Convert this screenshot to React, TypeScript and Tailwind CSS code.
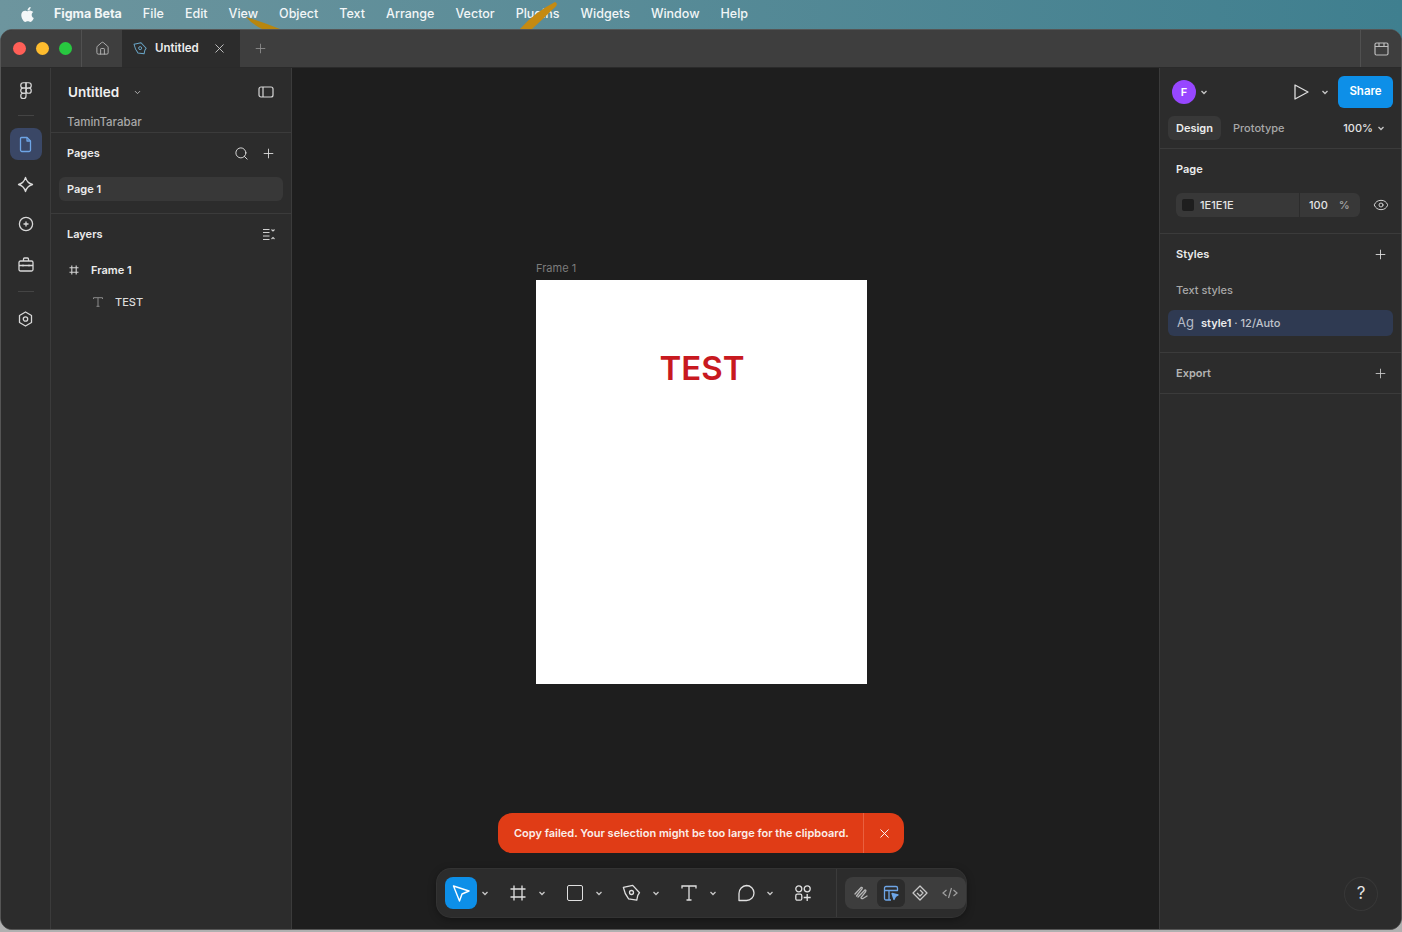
import { ChevronDown, Eye, House, Plus, Search, X } from "lucide-react";
import type { ReactNode } from "react";

const MENU_ITEMS = ["File", "Edit", "View", "Object", "Text", "Arrange", "Vector", "Plugins", "Widgets", "Window", "Help"];

function Caret({ className = "text-[#c8c8c8]" }: { className?: string }) {
  return (
    <svg width="8" height="8" viewBox="0 0 8 8" className={className} fill="none" stroke="currentColor" strokeWidth="1.3">
      <path d="M1.5 3 L4 5.5 L6.5 3" />
    </svg>
  );
}

function AppleLogo() {
  return (
    <svg width="15" height="17" viewBox="0 0 384 512" fill="#f4f7f8">
      <path d="M318.7 268.7c-.2-36.7 16.4-64.4 50-84.8-18.8-26.9-47.2-41.7-84.7-44.6-35.5-2.8-74.3 20.7-88.5 20.7-15 0-49.4-19.7-76.4-19.7C63.3 141.2 4 184.8 4 273.5q0 39.3 14.4 81.2c12.8 36.7 59 126.7 107.2 125.2 25.2-.6 43-17.9 75.8-17.9 31.8 0 48.3 17.9 76.4 17.9 48.6-.7 90.4-82.5 102.6-119.3-65.2-30.7-61.7-90-61.7-91.9zm-56.6-164.2c27.3-32.4 24.8-61.9 24-72.5-24.1 1.4-52 16.4-67.9 34.9-17.5 19.8-27.8 44.3-25.6 71.9 26.1 2 49.9-11.4 69.5-34.3z" />
    </svg>
  );
}

function FigmaLogo() {
  return (
    <svg width="16" height="18" viewBox="0 0 16 24" fill="none" stroke="#d8d8d8" strokeWidth="1.6">
      <path d="M8 1H4.5a3.5 3.5 0 0 0 0 7H8z" />
      <path d="M8 1h3.5a3.5 3.5 0 0 1 0 7H8z" />
      <path d="M8 8H4.5a3.5 3.5 0 0 0 0 7H8z" />
      <circle cx="11.5" cy="11.5" r="3.5" />
      <path d="M8 15H4.5A3.5 3.5 0 1 0 8 18.5z" />
    </svg>
  );
}

function PenTool({ size = 20, color = "#e0e0e0" }: { size?: number; color?: string }) {
  return (
    <svg width={size} height={size} viewBox="0 0 20 20" fill="none" stroke={color} strokeWidth="1.3" strokeLinejoin="round">
      <path d="M2 3.5 L11.5 2.5 L17.5 10.5 L15.5 13 L14 17.5 L6 15.5 Q2.5 10 2 3.5Z" transform="rotate(-6 10 10)" />
      <circle cx="9.5" cy="9.5" r="2" />
    </svg>
  );
}

function RailButton({ children, active }: { children: ReactNode; active?: boolean }) {
  return (
    <div className={`flex h-8 w-8 items-center justify-center rounded-lg ${active ? "bg-[#3a4766]" : ""}`}>{children}</div>
  );
}

function LeftRail() {
  return (
    <div className="flex w-[50px] shrink-0 flex-col items-center border-r border-[#3b3b3b] bg-[#2c2c2c] pt-[7px]">
      <RailButton>
        <FigmaLogo />
      </RailButton>
      <div className="mt-[8px] h-px w-4 bg-[#444]" />
      <div className="mt-[12px]">
        <RailButton active>
          <svg width="16" height="17" viewBox="0 0 16 17" fill="none" stroke="#6ea5e6" strokeWidth="1.3" strokeLinejoin="round">
            <path d="M3.5 1.5h5.5l3.5 3.5v9a1.5 1.5 0 0 1-1.5 1.5H3.5A1.5 1.5 0 0 1 2.5 14V2.5a1 1 0 0 1 1-1z" />
            <path d="M9 1.5v3.5h3.5" />
          </svg>
        </RailButton>
      </div>
      <div className="mt-[8px]">
        <RailButton>
          <svg width="17" height="17" viewBox="0 0 17 17" fill="none" stroke="#d8d8d8" strokeWidth="1.3" strokeLinejoin="round">
            <path d="M8.5 1.5 Q10 7 15.5 8.5 Q10 10 8.5 15.5 Q7 10 1.5 8.5 Q7 7 8.5 1.5Z" />
          </svg>
        </RailButton>
      </div>
      <div className="mt-[8px]">
        <RailButton>
          <svg width="16" height="16" viewBox="0 0 16 16" fill="none" stroke="#d8d8d8" strokeWidth="1.3">
            <circle cx="8" cy="8" r="6.6" />
            <path d="M8 5.5v5M5.5 8h5" />
          </svg>
        </RailButton>
      </div>
      <div className="mt-[8px]">
        <RailButton>
          <svg width="16" height="15" viewBox="0 0 16 15" fill="none" stroke="#d8d8d8" strokeWidth="1.3">
            <rect x="1" y="4" width="14" height="10" rx="1.5" />
            <path d="M5.5 4V2a1 1 0 0 1 1-1h3a1 1 0 0 1 1 1v2M1 8.5h14M5 7.5v2M11 7.5v2" />
          </svg>
        </RailButton>
      </div>
      <div className="mt-[11px] h-px w-4 bg-[#444]" />
      <div className="mt-[11px]">
        <RailButton>
          <svg width="15" height="16" viewBox="0 0 15 16" fill="none" stroke="#d8d8d8" strokeWidth="1.3">
            <path d="M7.5 1 L13.5 4.5 V11.5 L7.5 15 L1.5 11.5 V4.5Z" strokeLinejoin="round" />
            <circle cx="7.5" cy="8" r="2.2" />
          </svg>
        </RailButton>
      </div>
    </div>
  );
}

function LeftPanel() {
  return (
    <div className="flex w-[241px] shrink-0 flex-col border-r border-[#3b3b3b] bg-[#2c2c2c]">
      <div className="h-[65px] shrink-0 border-b border-[#3b3b3b] px-4">
        <div className="flex h-[48px] items-center pl-px">
          <span className="text-[13.5px] font-semibold text-[#f0f0f0]">Untitled</span>
          <ChevronDown size={9} strokeWidth={2.4} className="ml-[14px] text-[#bbb]" />
          <svg width="16" height="12" viewBox="0 0 16 12" fill="none" stroke="#d8d8d8" strokeWidth="1.2" className="ml-auto mr-[1px]">
            <rect x="1" y="1" width="14" height="10" rx="2" />
            <path d="M5 1v10" />
          </svg>
        </div>
        <div className="-mt-[1px] text-[11.5px] font-medium leading-[14px] text-[#a8a8a8]">TaminTarabar</div>
      </div>

      <div className="h-[81px] shrink-0 border-b border-[#3b3b3b]">
        <div className="flex h-[40px] items-center pl-4 pr-[15px]">
          <span className="text-[11px] font-semibold text-[#ececec]">Pages</span>
          <Search size={15} strokeWidth={1.5} className="ml-auto text-[#e0e0e0]" />
          <Plus size={15} strokeWidth={1.4} className="ml-3 text-[#e0e0e0]" />
        </div>
        <div className="mx-2 mt-1 flex h-6 items-center rounded-md bg-[#383838] pl-2 text-[11px] font-semibold text-[#ececec]">Page 1</div>
      </div>

      <div className="flex h-[40px] items-center pl-4 pr-[15px]">
        <span className="text-[11px] font-semibold text-[#ececec]">Layers</span>
        <svg width="14" height="13" viewBox="0 0 14 13" fill="none" stroke="#d0d0d0" strokeWidth="1.1" className="ml-auto">
          <path d="M1 1.5h6.5M1 4.5h6.5M1 8h6.5M1 11.5h6.5M9.5 1.5 L11 3 L12.5 1.5M9.5 11 L11 9.5 L12.5 11" />
        </svg>
      </div>
      <div className="flex h-8 items-center pl-[18px]">
        <svg width="10" height="10" viewBox="0 0 10 10" fill="none" stroke="#d4d4d4" strokeWidth="1.1">
          <path d="M2.8 0.5v9M7.2 0.5v9M0.5 2.8h9M0.5 7.2h9" />
        </svg>
        <span className="ml-[12px] text-[11px] font-semibold text-[#ececec]">Frame 1</span>
      </div>
      <div className="flex h-8 items-center pl-[42px]">
        <svg width="10" height="10" viewBox="0 0 10 10" fill="none" stroke="#8a8a8a" strokeWidth="1">
          <path d="M0.5 2V0.7h9V2M5 0.7v8.6M3.5 9.3h3" />
        </svg>
        <span className="ml-[12px] text-[11px] font-medium text-[#dcdcdc]">TEST</span>
      </div>
    </div>
  );
}

function RightPanel() {
  return (
    <div className="flex w-[242px] shrink-0 flex-col border-l border-[#3b3b3b] bg-[#2c2c2c]">
      <div className="h-[81px] shrink-0 border-b border-[#3b3b3b] pl-[8px] pr-[8px] pt-[8px]">
        <div className="flex h-8 items-center">
          <div className="ml-1 flex h-6 w-6 items-center justify-center rounded-full bg-[#9747ff] text-[11px] font-semibold text-white">F</div>
          <div className="ml-[4px]">
            <Caret />
          </div>
          <svg width="18" height="18" viewBox="0 0 18 18" fill="none" stroke="#dcdcdc" strokeWidth="1.3" strokeLinejoin="round" className="ml-auto">
            <path d="M3 2 V16 L16 9Z" />
          </svg>
          <div className="ml-[11px] mr-[9px]">
            <Caret />
          </div>
          <div className="flex h-8 w-[55px] items-center justify-center rounded-md bg-[#0d8fe8] text-[11.5px] font-semibold text-white">Share</div>
        </div>
        <div className="mt-2 flex h-6 items-center">
          <div className="flex h-6 w-[53px] items-center justify-center rounded-md bg-[#383838] text-[11px] font-semibold text-[#ececec]">Design</div>
          <span className="ml-3 text-[11px] font-medium text-[#a8a8a8]">Prototype</span>
          <span className="ml-auto text-[11px] font-medium text-[#e4e4e4]">100%</span>
          <div className="ml-[4px] mr-2">
            <Caret />
          </div>
        </div>
      </div>

      <div className="h-[85px] shrink-0 border-b border-[#3b3b3b] pl-4 pr-[12px]">
        <div className="flex h-[40px] items-center text-[11px] font-semibold text-[#ececec]">Page</div>
        <div className="mt-1 flex items-center">
          <div className="flex h-6 w-[184px] items-center rounded-md bg-[#383838] pl-[6px] text-[11px] font-medium text-[#e4e4e4]">
            <div className="h-3 w-3 rounded-[2px] bg-[#1e1e1e]" />
            <span className="ml-[6px] w-[99px]">1E1E1E</span>
            <div className="h-6 w-px bg-[#2c2c2c]" />
            <span className="ml-[9px]">100</span>
            <span className="ml-[11px] text-[#a8a8a8]">%</span>
          </div>
          <Eye size={16} strokeWidth={1.4} className="ml-auto text-[#dcdcdc]" />
        </div>
      </div>

      <div className="h-[119px] shrink-0 border-b border-[#3b3b3b] pl-2 pr-[8px]">
        <div className="flex h-[40px] items-center pl-2 pr-[5px]">
          <span className="text-[11px] font-semibold text-[#ececec]">Styles</span>
          <Plus size={15} strokeWidth={1.4} className="ml-auto text-[#e0e0e0]" />
        </div>
        <div className="flex h-8 items-center pl-2 text-[11px] font-medium text-[#a8a8a8]">Text styles</div>
        <div className="mt-1 flex h-[26px] items-center rounded-md bg-[#2f3a52] pl-[9px]">
          <span className="w-[24px] text-[13px] text-[#b4bac6]">Ag</span>
          <span className="text-[11px] font-semibold text-[#ececec]">style1</span>
          <span className="text-[11px] font-medium text-[#c0c4cc]">&nbsp;· 12/Auto</span>
        </div>
      </div>

      <div className="flex h-[41px] shrink-0 items-center border-b border-[#3b3b3b] pl-4 pr-[13px]">
        <span className="text-[11px] font-semibold text-[#b4b4b4]">Export</span>
        <Plus size={15} strokeWidth={1.4} className="ml-auto text-[#c8c8c8]" />
      </div>
    </div>
  );
}

function Tool({ children, caret = true }: { children: ReactNode; caret?: boolean }) {
  return (
    <div className="flex h-8 w-[57px] shrink-0 items-center">
      <div className="flex h-8 w-8 items-center justify-center">{children}</div>
      {caret && (
        <div className="flex w-4 justify-center">
          <Caret />
        </div>
      )}
    </div>
  );
}

function Toolbar() {
  return (
    <div className="flex h-12 w-[529px] items-center rounded-[14px] bg-[#2c2c2c] pl-2 shadow-[0_0_0_1px_#333,0_2px_8px_rgba(0,0,0,0.4)]">
      <Tool>
        <div className="flex h-8 w-8 items-center justify-center rounded-lg bg-[#0d8fe8]">
          <svg width="20" height="20" viewBox="0 0 20 20" fill="none" stroke="#fff" strokeWidth="1.4" strokeLinejoin="round">
            <path d="M2.5 3 L18 8 L11 11 L8.5 18Z" />
          </svg>
        </div>
      </Tool>
      <Tool>
        <svg width="16" height="16" viewBox="0 0 16 16" fill="none" stroke="#e0e0e0" strokeWidth="1.3">
          <path d="M4 0.5v15M12 0.5v15M0.5 4h15M0.5 12h15" />
        </svg>
      </Tool>
      <Tool>
        <div className="h-4 w-4 rounded-[2px] border border-[#e0e0e0]" />
      </Tool>
      <Tool>
        <PenTool />
      </Tool>
      <Tool>
        <svg width="16" height="16" viewBox="0 0 16 16" fill="none" stroke="#e0e0e0" strokeWidth="1.3">
          <path d="M1 3.5V1h14v2.5M8 1v14M5.5 15h5" />
        </svg>
      </Tool>
      <Tool>
        <svg width="18" height="18" viewBox="0 0 18 18" fill="none" stroke="#e0e0e0" strokeWidth="1.3" strokeLinejoin="round">
          <path d="M9.5 1.5a7.5 7.5 0 0 1 0 15H2V9.5a8 8 0 0 1 7.5-8z" />
        </svg>
      </Tool>
      <Tool caret={false}>
        <svg width="18" height="18" viewBox="0 0 18 18" fill="none" stroke="#e0e0e0" strokeWidth="1.3">
          <circle cx="4.8" cy="4.8" r="3" />
          <circle cx="13.2" cy="4.8" r="3" />
          <rect x="1.8" y="10.2" width="6" height="6" rx="1.5" />
          <path d="M13.2 10v7M9.7 13.5h7" />
        </svg>
      </Tool>
      <div className="ml-[-8px] h-12 w-px bg-[#3b3b3b]" />
      <div className="ml-2 flex h-8 w-[122px] items-center justify-between rounded-lg bg-[#3d3d3d] pl-[2px] pr-[2px]">
        <div className="flex h-7 w-7 items-center justify-center">
          <svg width="16" height="16" viewBox="0 0 16 16" fill="none" stroke="#b8b8b8" strokeWidth="1.3" strokeLinecap="round">
            <path d="M2 9 L8 2.5 Q10 2 9 4 L3.5 11 M5 12 L12 5 Q13.5 5 12.5 7 L8 12.5 Q8 14 10 13.5 L14 11" />
          </svg>
        </div>
        <div className="flex h-7 w-7 items-center justify-center rounded-md bg-[#2c2c2c]">
          <svg width="16" height="16" viewBox="0 0 16 16" fill="none" stroke="#6ea5e6" strokeWidth="1.3" strokeLinejoin="round">
            <path d="M8 15H3a1.5 1.5 0 0 1-1.5-1.5V3A1.5 1.5 0 0 1 3 1.5h10A1.5 1.5 0 0 1 14.5 3v2.5H1.5M6 5.5V15" />
            <path d="M9 8.5 L15 10 L12.5 11.5 L11 14.5Z" fill="#6ea5e6" />
          </svg>
        </div>
        <div className="flex h-7 w-7 items-center justify-center">
          <svg width="16" height="16" viewBox="0 0 16 16" fill="none" stroke="#c8c8c8" strokeWidth="1.3" strokeLinejoin="round">
            <path d="M8 1 L15 8 L8 15 L1 8Z" />
            <path d="M8 5 L11 8 L8 11 L5 8" />
          </svg>
        </div>
        <div className="flex h-7 w-7 items-center justify-center">
          <svg width="16" height="14" viewBox="0 0 16 14" fill="none" stroke="#a0a0a0" strokeWidth="1.2">
            <path d="M4.5 4 L1 7 L4.5 10M11.5 4 L15 7 L11.5 10M9.5 2 L6.5 12" />
          </svg>
        </div>
      </div>
    </div>
  );
}

export default function App() {
  return (
    <div
      className="relative h-[932px] w-[1402px] overflow-hidden bg-[linear-gradient(180deg,transparent_900px,#b0b0b0_900px),linear-gradient(90deg,#6d959e,#3f7f8f)] font-['Inter',sans-serif]"
    >
      {/* menu bar */}
      <div className="flex h-[29px] items-center pl-[20px] text-[12.5px] font-medium text-[#f2f6f7]">
        <AppleLogo />
        <span className="ml-[19px] font-bold">Figma Beta</span>
        <div className="ml-[21px] flex gap-[21px]">
          {MENU_ITEMS.map((item) => (
            <span key={item}>{item}</span>
          ))}
        </div>
      </div>

      {/* wallpaper streaks peeking around the menu titles */}
      <svg width="1402" height="29" className="absolute left-0 top-0">
        <path d="M246 17 Q262 22 280 29 L262 29 Q252 24 246 17Z" fill="#b8860f" />
        <path d="M520 29 Q535 12 555 2 Q560 4 552 10 Q542 20 532 29Z" fill="#c58a12" />
      </svg>

      {/* app window */}
      <div className="relative flex h-[901px] flex-col overflow-hidden rounded-[12px] border border-[#555] bg-[#2c2c2c]">
        <div className="flex h-[38px] shrink-0 items-center border-b border-[#2a2a2a] bg-[#3e3e3e]">
          <div className="flex w-[80px] shrink-0 items-center pl-[12px]">
            <span className="h-[13px] w-[13px] rounded-full bg-[#ff5f57]" />
            <span className="ml-[10px] h-[13px] w-[13px] rounded-full bg-[#febc2e]" />
            <span className="ml-[10px] h-[13px] w-[13px] rounded-full bg-[#28c840]" />
          </div>
          <div className="flex h-full w-[41px] shrink-0 items-center justify-center border-l border-[#505050]">
            <House size={15} strokeWidth={1.4} className="text-[#bdbdbd]" />
          </div>
          <div className="flex h-full w-[118px] shrink-0 items-center bg-[#2c2c2c] pl-[11px]">
            <PenTool size={15} color="#6aa7c9" />
            <span className="ml-[7px] text-[11.5px] font-semibold text-[#ececec]">Untitled</span>
            <X size={15} strokeWidth={1.4} className="ml-[13px] text-[#d0d0d0]" />
          </div>
          <div className="flex h-full w-10 items-center justify-center">
            <Plus size={15} strokeWidth={1.4} className="text-[#8e8e8e]" />
          </div>
          <div className="ml-auto flex h-full w-[41px] items-center justify-center border-l border-[#505050]">
            <svg width="15" height="14" viewBox="0 0 15 14" fill="none" stroke="#bdbdbd" strokeWidth="1.2">
              <rect x="1" y="1" width="13" height="12" rx="1.5" />
              <path d="M1 4.5h13M5 1v3.5M10 1v3.5" />
            </svg>
          </div>
        </div>

        <div className="flex min-h-0 flex-1">
          <LeftRail />
          <LeftPanel />

          {/* canvas */}
          <div className="relative min-w-0 flex-1 bg-[#1e1e1e]">
            <div className="absolute left-[244px] top-[192px] text-[11px] text-[#7c7c7c]">Frame 1</div>
            <div className="absolute left-[244px] top-[212px] flex h-[404px] w-[331px] justify-center bg-white pl-[1px] pt-[68px]">
              <span className="text-[33px] font-semibold leading-[40px] text-[#c8191f]">TEST</span>
            </div>
            <div className="absolute left-[206px] top-[745px] flex h-10 w-[406px] items-center rounded-[14px] bg-[#e03c16] pl-4 text-[11px] font-semibold text-[#fbeee9]">
              <span className="w-[349px]">Copy failed. Your selection might be too large for the clipboard.</span>
              <div className="h-10 w-px bg-[#e9603f]" />
              <div className="flex flex-1 justify-center">
                <X size={15} strokeWidth={1.5} className="text-white" />
              </div>
            </div>
            <div className="absolute left-[145px] top-[801px]">
              <Toolbar />
            </div>
          </div>

          <div className="relative flex">
            <RightPanel />
            <div className="absolute bottom-[19px] right-[24px] flex h-8 w-8 items-center justify-center rounded-full bg-[#2c2c2c] text-[17px] text-[#e4e4e4] shadow-[0_0_0_1px_#383838]">
              ?
            </div>
          </div>
        </div>
      </div>
    </div>
  );
}
